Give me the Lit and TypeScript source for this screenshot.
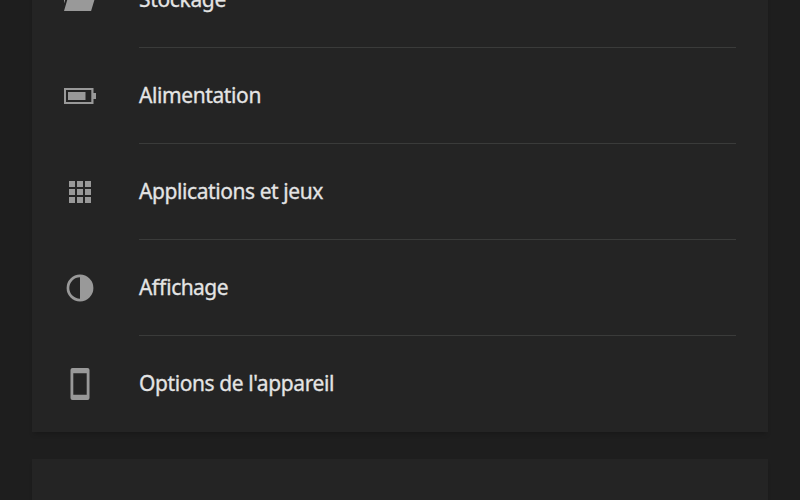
import { LitElement, html, css, svg } from "lit";
import { customElement } from "lit/decorators.js";

const icons = {
  storage: svg`<path d="M0 1H10L13 5H27V10H3.2L0 19.5Z M4.1 13H31.3L27.1 27H0Z"/>`,
  battery: svg`<path fill-rule="evenodd" d="M0 8H29.5V13H32V19H29.5V24H0ZM2 10V22H27.3V10Z"/><path d="M4 12H21.5V20H4Z"/>`,
  apps: svg`<path d="M5 5h6v6H5zM13 5h6v6h-6zM21 5h6v6h-6zM5 13h6v6H5zM13 13h6v6h-6zM21 13h6v6h-6zM5 21h6v6H5zM13 21h6v6h-6zM21 21h6v6h-6z"/>`,
  display: svg`<path fill-rule="evenodd" d="M16 2.6a13.4 13.4 0 1 0 0 26.8a13.4 13.4 0 1 0 0-26.8zM16 5.3v21.4a10.7 10.7 0 0 1 0-21.4z"/>`,
  device: svg`<path fill-rule="evenodd" d="M8.5 0h15a2 2 0 0 1 2 2v28a2 2 0 0 1-2 2h-15a2 2 0 0 1-2-2V2a2 2 0 0 1 2-2zM9.3 5.2v21.5h13.4V5.2z"/>`,
};

const rows = [
  { icon: icons.storage, label: "Stockage", spacing: -0.34 },
  { icon: icons.battery, label: "Alimentation", spacing: -0.4 },
  { icon: icons.apps, label: "Applications et jeux", spacing: -0.42 },
  { icon: icons.display, label: "Affichage", spacing: -0.56 },
  { icon: icons.device, label: "Options de l'appareil", spacing: -0.4 },
];

@customElement("app-root")
export class AppRoot extends LitElement {
  static styles = css`
    :host {
      display: flex;
      flex-direction: column;
      gap: 27px;
      box-sizing: border-box;
      height: 500px;
      padding: 0 32px;
      overflow: hidden;
      background: #1e1e1e;
      color: #e4e4e4;
      font: 21px/32px "Noto Sans", "Open Sans", sans-serif;
      font-feature-settings: "liga" 1;
      -webkit-text-stroke: 0.3px #e4e4e4;
    }
    .card {
      flex: none;
      background: #242424;
      box-shadow: 0 4px 5px -2px rgba(0, 0, 0, 0.22);
    }
    .settings {
      margin-top: -48px;
    }
    .next {
      height: 96px;
    }
    .row {
      display: flex;
      height: 96px;
      padding: 0 32px;
      gap: 43px;
      align-items: center;
    }
    svg {
      width: 32px;
      height: 32px;
      flex: none;
      fill: #999;
      overflow: visible;
    }
    .label {
      flex: 1;
      box-sizing: border-box;
      height: 96px;
      padding-bottom: 1px;
      display: flex;
      align-items: center;
      border-bottom: 1px solid #3a3b3a;
      white-space: pre;
    }
    .row:last-child .label {
      border-color: transparent;
    }
  `;

  render() {
    return html`
      <section class="card settings">
        ${rows.map(
          (r) => html`<div class="row">
            <svg viewBox="0 0 32 32">${r.icon}</svg>
            <div class="label"><span style="letter-spacing:${r.spacing}px">${r.label}</span></div>
          </div>`
        )}
      </section>
      <section class="card next"></section>
    `;
  }
}
